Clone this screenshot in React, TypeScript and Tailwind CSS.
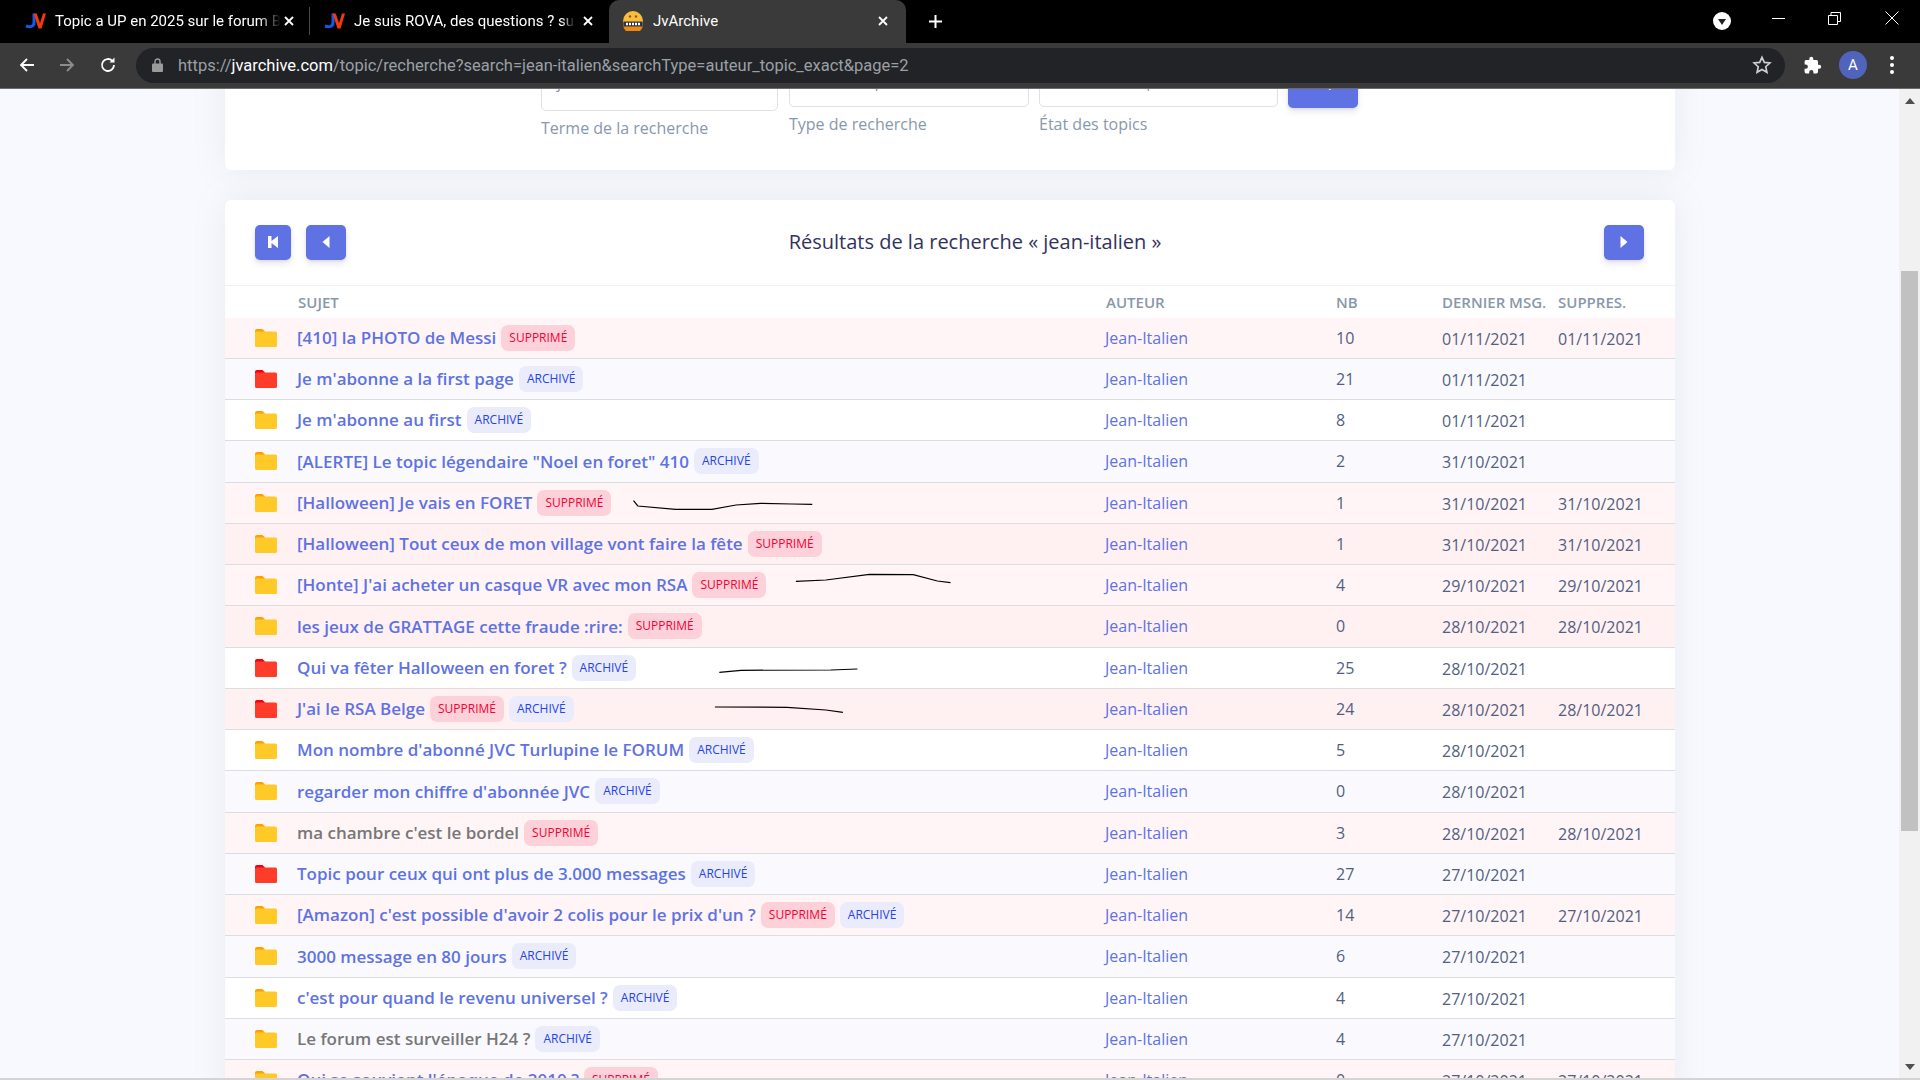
import type { ReactNode } from "react";

type Row = {
  title: string;
  nb: number;
  last: string;
  deleted?: string;
  archived?: boolean;
  red?: boolean;
  seen?: boolean;
};

const rows: Row[] = [
  { title: "[410] la PHOTO de Messi", nb: 10, last: "01/11/2021", deleted: "01/11/2021" },
  { title: "Je m'abonne a la first page", nb: 21, last: "01/11/2021", archived: true, red: true },
  { title: "Je m'abonne au first", nb: 8, last: "01/11/2021", archived: true },
  { title: '[ALERTE] Le topic légendaire "Noel en foret" 410', nb: 2, last: "31/10/2021", archived: true },
  { title: "[Halloween] Je vais en FORET", nb: 1, last: "31/10/2021", deleted: "31/10/2021" },
  { title: "[Halloween] Tout ceux de mon village vont faire la fête", nb: 1, last: "31/10/2021", deleted: "31/10/2021" },
  { title: "[Honte] J'ai acheter un casque VR avec mon RSA", nb: 4, last: "29/10/2021", deleted: "29/10/2021" },
  { title: "les jeux de GRATTAGE cette fraude :rire:", nb: 0, last: "28/10/2021", deleted: "28/10/2021" },
  { title: "Qui va fêter Halloween en foret ?", nb: 25, last: "28/10/2021", archived: true, red: true },
  { title: "J'ai le RSA Belge", nb: 24, last: "28/10/2021", deleted: "28/10/2021", archived: true, red: true },
  { title: "Mon nombre d'abonné JVC Turlupine le FORUM", nb: 5, last: "28/10/2021", archived: true },
  { title: "regarder mon chiffre d'abonnée JVC", nb: 0, last: "28/10/2021", archived: true },
  { title: "ma chambre c'est le bordel", nb: 3, last: "28/10/2021", deleted: "28/10/2021", seen: true },
  { title: "Topic pour ceux qui ont plus de 3.000 messages", nb: 27, last: "27/10/2021", archived: true, red: true },
  { title: "[Amazon] c'est possible d'avoir 2 colis pour le prix d'un ?", nb: 14, last: "27/10/2021", deleted: "27/10/2021", archived: true },
  { title: "3000 message en 80 jours", nb: 6, last: "27/10/2021", archived: true },
  { title: "c'est pour quand le revenu universel ?", nb: 4, last: "27/10/2021", archived: true },
  { title: "Le forum est surveiller H24 ?", nb: 4, last: "27/10/2021", archived: true, seen: true },
  { title: "Qui se souvient l'époque de 2010 ?", nb: 0, last: "27/10/2021", deleted: "27/10/2021" },
];

const headCols = "grid grid-cols-[73px_808px_230px_106px_116px_1fr] items-center";
const rowCols = "grid grid-cols-[72px_808px_231px_106px_116px_1fr] items-center";

const JvLogo = () => (
  <svg width="21" height="16" viewBox="0 0 21 16" className="shrink-0">
    <path d="M9 0.500v9.500c0 3.500-4 4.500-8 3" stroke="#0f5bea" strokeWidth="3" fill="none" />
    <path d="M8.500 0.500h3.200L15 10l3-9.500h3L16.500 15.500h-3z" fill="#f2380f" />
  </svg>
);

const TabClose = () => (
  <svg width="10" height="10" viewBox="0 0 10 10" className="shrink-0">
    <path d="M1 1l8 8M9 1l-8 8" stroke="#fff" strokeWidth="1.800" />
  </svg>
);

const BrowserBar = () => (
  <div className="shrink-0 font-['Roboto',sans-serif]">
    <div className="h-[43px] bg-black flex items-end text-white text-[15px]">
      <div className="w-[309px] h-[43px] flex items-center pl-[25px] pb-[1px]">
        <JvLogo />
        <span className="ml-[9px] w-[226px] overflow-hidden whitespace-nowrap [mask-image:linear-gradient(to_right,#000_90%,transparent)]">
          Topic a UP en 2025 sur le forum Blabla
        </span>
        <span className="ml-[3px]">
          <TabClose />
        </span>
      </div>
      <div className="w-px h-[28px] mb-[8px] bg-[#4a4a4a]" />
      <div className="w-[299px] h-[43px] flex items-center pl-[14px] pb-[1px]">
        <JvLogo />
        <span className="ml-[9px] w-[221px] overflow-hidden whitespace-nowrap [mask-image:linear-gradient(to_right,#000_94%,transparent)]">
          Je suis ROVA, des questions ? sur le forum
        </span>
        <span className="ml-[8px]">
          <TabClose />
        </span>
      </div>
      <div className="w-[297px] h-[43px] bg-[#3a3a3a] rounded-t-[10px] flex items-center pl-[14px] pb-[1px]">
        <svg width="20" height="20" viewBox="0 0 20 20" className="shrink-0">
          <circle cx="10" cy="10" r="10" fill="#f9bd3c" />
          <path d="M0 13a10 10 0 0 0 20 0z" fill="#ea8a13" />
          <rect x="0.500" y="10.500" width="19" height="5" fill="#2d3442" />
          <circle cx="7" cy="5.500" r="1.200" fill="#8a5a14" />
          <circle cx="13" cy="5.500" r="1.200" fill="#8a5a14" />
          <path d="M3 13h14" stroke="#fff" strokeWidth="2.500" strokeDasharray="2 1" />
        </svg>
        <span className="ml-[10px] w-[225px]">JvArchive</span>
        <TabClose />
      </div>
      <div className="h-[43px] flex items-center ml-[22px] pb-[1px]">
        <svg width="15" height="15" viewBox="0 0 15 15">
          <path d="M7.500 1v13M1 7.500h13" stroke="#fff" strokeWidth="2" />
        </svg>
      </div>
      <div className="ml-auto h-[43px] flex items-center pb-[1px]">
        <svg width="18" height="18" viewBox="0 0 18 18">
          <circle cx="9" cy="9" r="9" fill="#fff" />
          <path d="M5 7h8l-4 6z" fill="#222" />
        </svg>
        <svg width="13" height="13" viewBox="0 0 13 13" className="ml-[41px] mb-[6px]">
          <path d="M0 6.500h13" stroke="#fff" />
        </svg>
        <svg width="13" height="13" viewBox="0 0 13 13" className="ml-[43px] mb-[6px]">
          <path d="M0.500 3.500h9v9h-9zM3 3.500V.5h9.500v9H9.500" stroke="#fff" fill="none" />
        </svg>
        <svg width="14" height="14" viewBox="0 0 14 14" className="ml-[44px] mr-[21px] mb-[6px]">
          <path d="M.5.5l13 13M13.500.5l-13 13" stroke="#fff" />
        </svg>
      </div>
    </div>
    <div className="h-[46px] bg-[#3a3a3a] border-b border-[#6b6b6b] flex items-center pb-[1px]">
      <div className="w-[136px] flex items-center pl-[19px] gap-[24px]">
        <svg width="16" height="16" viewBox="0 0 16 16">
          <path d="M15 8H2M8 2L2 8l6 6" stroke="#fff" strokeWidth="1.800" fill="none" />
        </svg>
        <svg width="16" height="16" viewBox="0 0 16 16">
          <path d="M1 8h13M8 2l6 6-6 6" stroke="#8d8d8d" strokeWidth="1.800" fill="none" />
        </svg>
        <svg width="18" height="18" viewBox="0 0 18 18">
          <path d="M15 9a6 6 0 1 1-1.800-4.300" stroke="#fff" strokeWidth="1.800" fill="none" />
          <path d="M15.500 1.500v5h-5z" fill="#fff" />
        </svg>
      </div>
      <div className="w-[1649px] h-[35px] rounded-full bg-[#222327] flex items-center">
        <svg width="11" height="14" viewBox="0 0 11 14" className="ml-[16px]">
          <rect y="5.500" width="11" height="8.500" rx="1" fill="#9a9a9a" />
          <path d="M3 6V3.500a2.500 2.500 0 0 1 5 0V6" stroke="#9a9a9a" strokeWidth="1.400" fill="none" />
        </svg>
        <span className="ml-[15px] pt-[2px] text-[16.5px] text-[#9aa0a6] whitespace-nowrap">
          https://<span className="text-white">jvarchive.com</span>/topic/recherche?search=jean-italien&amp;searchType=auteur_topic_exact&amp;page=2
        </span>
        <svg width="20" height="20" viewBox="0 0 24 24" className="ml-auto mr-[13px]">
          <path d="M12 2.800l2.800 6.100 6.700.7-5 4.500 1.400 6.600-5.900-3.400-5.900 3.400 1.400-6.600-5-4.500 6.700-.7z" stroke="#cfcfcf" strokeWidth="2" fill="none" />
        </svg>
      </div>
      <svg width="19" height="19" viewBox="0 0 24 24" className="ml-[18px]">
        <path d="M20.500 11H19V7a2 2 0 0 0-2-2h-4V3.500a2.500 2.500 0 0 0-5 0V5H4a2 2 0 0 0-2 2v3.800h1.500a2.700 2.700 0 0 1 0 5.400H2V20a2 2 0 0 0 2 2h3.800v-1.500a2.700 2.700 0 0 1 5.400 0V22H17a2 2 0 0 0 2-2v-4h1.500a2.500 2.500 0 0 0 0-5z" fill="#fff" />
      </svg>
      <div className="ml-[17px] w-[28px] h-[28px] rounded-full bg-[#5164bd] text-white text-[15px] flex items-center justify-center">
        A
      </div>
      <div className="ml-[23px] flex flex-col gap-[3px]">
        <span className="w-[4px] h-[4px] rounded-full bg-white" />
        <span className="w-[4px] h-[4px] rounded-full bg-white" />
        <span className="w-[4px] h-[4px] rounded-full bg-white" />
      </div>
    </div>
  </div>
);

const Folder = ({ red }: { red?: boolean }) => (
  <svg width="22" height="18" viewBox="0 0 22 18">
    <path d="M0 2a2 2 0 0 1 2-2h5.500l2.500 2.500v6H0z" fill={red ? "#f5000f" : "#ffa000"} />
    <path d="M0 4a1.500 1.500 0 0 1 1.500-1.500h19A1.500 1.500 0 0 1 22 4v12.500a1.500 1.500 0 0 1-1.500 1.500h-19A1.500 1.500 0 0 1 0 16.500z" fill={red ? "#ff3b2a" : "#ffca28"} />
  </svg>
);

const Badge = ({ kind }: { kind: "deleted" | "archived" }) =>
  kind === "deleted" ? (
    <span className="ml-[5px] h-[26px] px-[8px] rounded-[7px] bg-[#fdd1da] text-[#f80031] text-[12px] font-medium leading-[25px]">
      SUPPRIMÉ
    </span>
  ) : (
    <span className="ml-[5px] h-[26px] px-[8px] rounded-[7px] bg-[#eaecfb] text-[#2643e9] text-[12px] font-medium leading-[25px]">
      ARCHIVÉ
    </span>
  );

const NavButton = ({ wide, children }: { wide?: boolean; children: ReactNode }) => (
  <button
    className={`${wide ? "w-[40px]" : "w-[36px]"} h-[35px] rounded-[5px] bg-[#5e72e4] shadow-[0_4px_6px_rgba(50,50,93,0.11),0_1px_3px_rgba(0,0,0,0.08)] flex items-center justify-center`}
  >
    {children}
  </button>
);

const SearchCard = () => (
  <section className="mt-[-40px] h-[121px] bg-white rounded-[6px] shadow-[0_0_32px_0_rgba(136,152,170,0.15)] pl-[316px] pt-[15px] flex items-start gap-[10px] text-[#8898aa]">
    <div className="w-[237px] mr-[1px]">
      <div className="h-[47px] rounded-[5px] border border-[#dee2e6] pl-[15px] pt-[5px] text-[16px]">
        jean-italien
      </div>
      <p className="mt-[5px] leading-[24px]">Terme de la recherche</p>
    </div>
    <div className="w-[240px]">
      <div className="h-[43px] rounded-[5px] border border-[#dee2e6] pl-[14px] pt-[4px] text-[16px]">
        Auteur topic exact
      </div>
      <p className="mt-[5px] leading-[24px]">Type de recherche</p>
    </div>
    <div className="w-[239px]">
      <div className="h-[43px] rounded-[5px] border border-[#dee2e6] pl-[26px] pt-[4px] text-[16px]">
        Tous les topics
      </div>
      <p className="mt-[5px] leading-[24px]">État des topics</p>
    </div>
    <div className="w-[70px] h-[44px] pt-[10px] rounded-[5px] bg-[#5e72e4] shadow-[0_4px_6px_rgba(50,50,93,0.11),0_1px_3px_rgba(0,0,0,0.08)] flex justify-center">
      <svg width="16" height="16" viewBox="0 0 16 16" fill="none" stroke="#fff" strokeWidth="2">
        <circle cx="7" cy="7" r="5" />
        <path d="M11 11l4.500 4.500" />
      </svg>
    </div>
  </section>
);

const rowBg = (row: Row, index: number) => {
  if (row.deleted) return index % 2 === 0 ? "bg-[#fff5f6]" : "bg-[#fff0f2]";
  return index % 2 === 0 ? "bg-white" : "bg-[#fafafe]";
};

const ResultsCard = () => (
  <section className="mt-[30px] bg-white rounded-[6px] shadow-[0_0_32px_0_rgba(136,152,170,0.15)]">
    <div className="h-[86px] pl-[30px] pr-[31px] pb-[1px] flex items-center justify-between border-b border-[#eff0f3]">
      <div className="flex gap-[15px]">
        <NavButton>
          <svg width="12" height="14" viewBox="0 0 12 14">
            <path d="M1 1h3.500v5L11 1v12L4.500 8v5H1z" fill="#fff" />
          </svg>
        </NavButton>
        <NavButton wide>
          <svg width="8" height="14" viewBox="0 0 8 14">
            <path d="M7.500 1v12L0.500 7z" fill="#fff" />
          </svg>
        </NavButton>
      </div>
      <h2 className="text-[20px] text-[#32325d]">Résultats de la recherche « jean-italien »</h2>
      <NavButton wide>
        <svg width="8" height="14" viewBox="0 0 8 14">
          <path d="M0.500 1v12l7-6z" fill="#fff" />
        </svg>
      </NavButton>
    </div>
    <div className={`${headCols} h-[31.6px] text-[15px] font-semibold text-[#8898aa]`}>
      <span />
      <span>SUJET</span>
      <span>AUTEUR</span>
      <span>NB</span>
      <span>DERNIER MSG.</span>
      <span>SUPPRES.</span>
    </div>
    {rows.map((row, index) => (
      <div key={index} className={`${rowCols} h-[41.25px] border-b border-[#dcdde1] ${rowBg(row, index)}`}>
        <div className="pl-[30px] flex">
          <Folder red={row.red} />
        </div>
        <div className="flex items-center">
          <a className={`text-[17px] font-semibold ${row.seen ? "text-[#777777]" : "text-[#5e72e4]"}`}>{row.title}</a>
          {row.deleted && <Badge kind="deleted" />}
          {row.archived && <Badge kind="archived" />}
        </div>
        <a className="text-[#5e72e4] text-[16px]">Jean-Italien</a>
        <span className="text-[#525f7f] text-[16px]">{row.nb}</span>
        <span className="text-[#525f7f] text-[16px] pt-[2px]">{row.last}</span>
        <span className="text-[#525f7f] text-[16px] pt-[2px]">{row.deleted}</span>
      </div>
    ))}
  </section>
);

const Scribbles = () => (
  <svg className="absolute left-0 top-[-89px] pointer-events-none" width="1899" height="1080" viewBox="0 0 1899 1080" fill="none" stroke="#000" strokeWidth="1.200">
    <polyline points="633.500,500.700 637.800,506 675.600,509.300 712,509.300 736,505 760.500,503.300 792,504 812.300,504.300" />
    <polyline points="795.900,581.300 825.900,580 869.500,574.300 913.200,574.700 937.400,581 950.500,582.700" />
    <polyline points="719.300,672.300 741,670.300 830.800,670 857.400,669" />
    <polyline points="714.900,707 787.100,707.300 825.900,710 842.900,712.300" />
  </svg>
);

const Scrollbar = () => (
  <div className="w-[21px] shrink-0 bg-[#f1f1f1] px-[2px] flex flex-col">
    <div className="h-[182px] flex justify-center pt-[9px]">
      <svg width="10" height="6" viewBox="0 0 10 6">
        <path d="M5 0l5 6H0z" fill="#505050" />
      </svg>
    </div>
    <div className="h-[560px] bg-[#c1c1c1]" />
    <div className="flex-1 flex items-end justify-center pb-[8px]">
      <svg width="10" height="6" viewBox="0 0 10 6">
        <path d="M0 0h10L5 6z" fill="#505050" />
      </svg>
    </div>
  </div>
);

export default function App() {
  return (
    <div className="w-[1920px] h-[1080px] overflow-hidden flex flex-col bg-[#f8f9fe] font-['Open_Sans',sans-serif]">
      <BrowserBar />
      <div className="flex-1 min-h-0 flex">
        <main className="relative flex-1 overflow-hidden pl-[225px] pr-[224px]">
          <SearchCard />
          <ResultsCard />
          <Scribbles />
        </main>
        <Scrollbar />
      </div>
      <div className="h-[2px] shrink-0 bg-[#d4d4d4]" />
    </div>
  );
}
